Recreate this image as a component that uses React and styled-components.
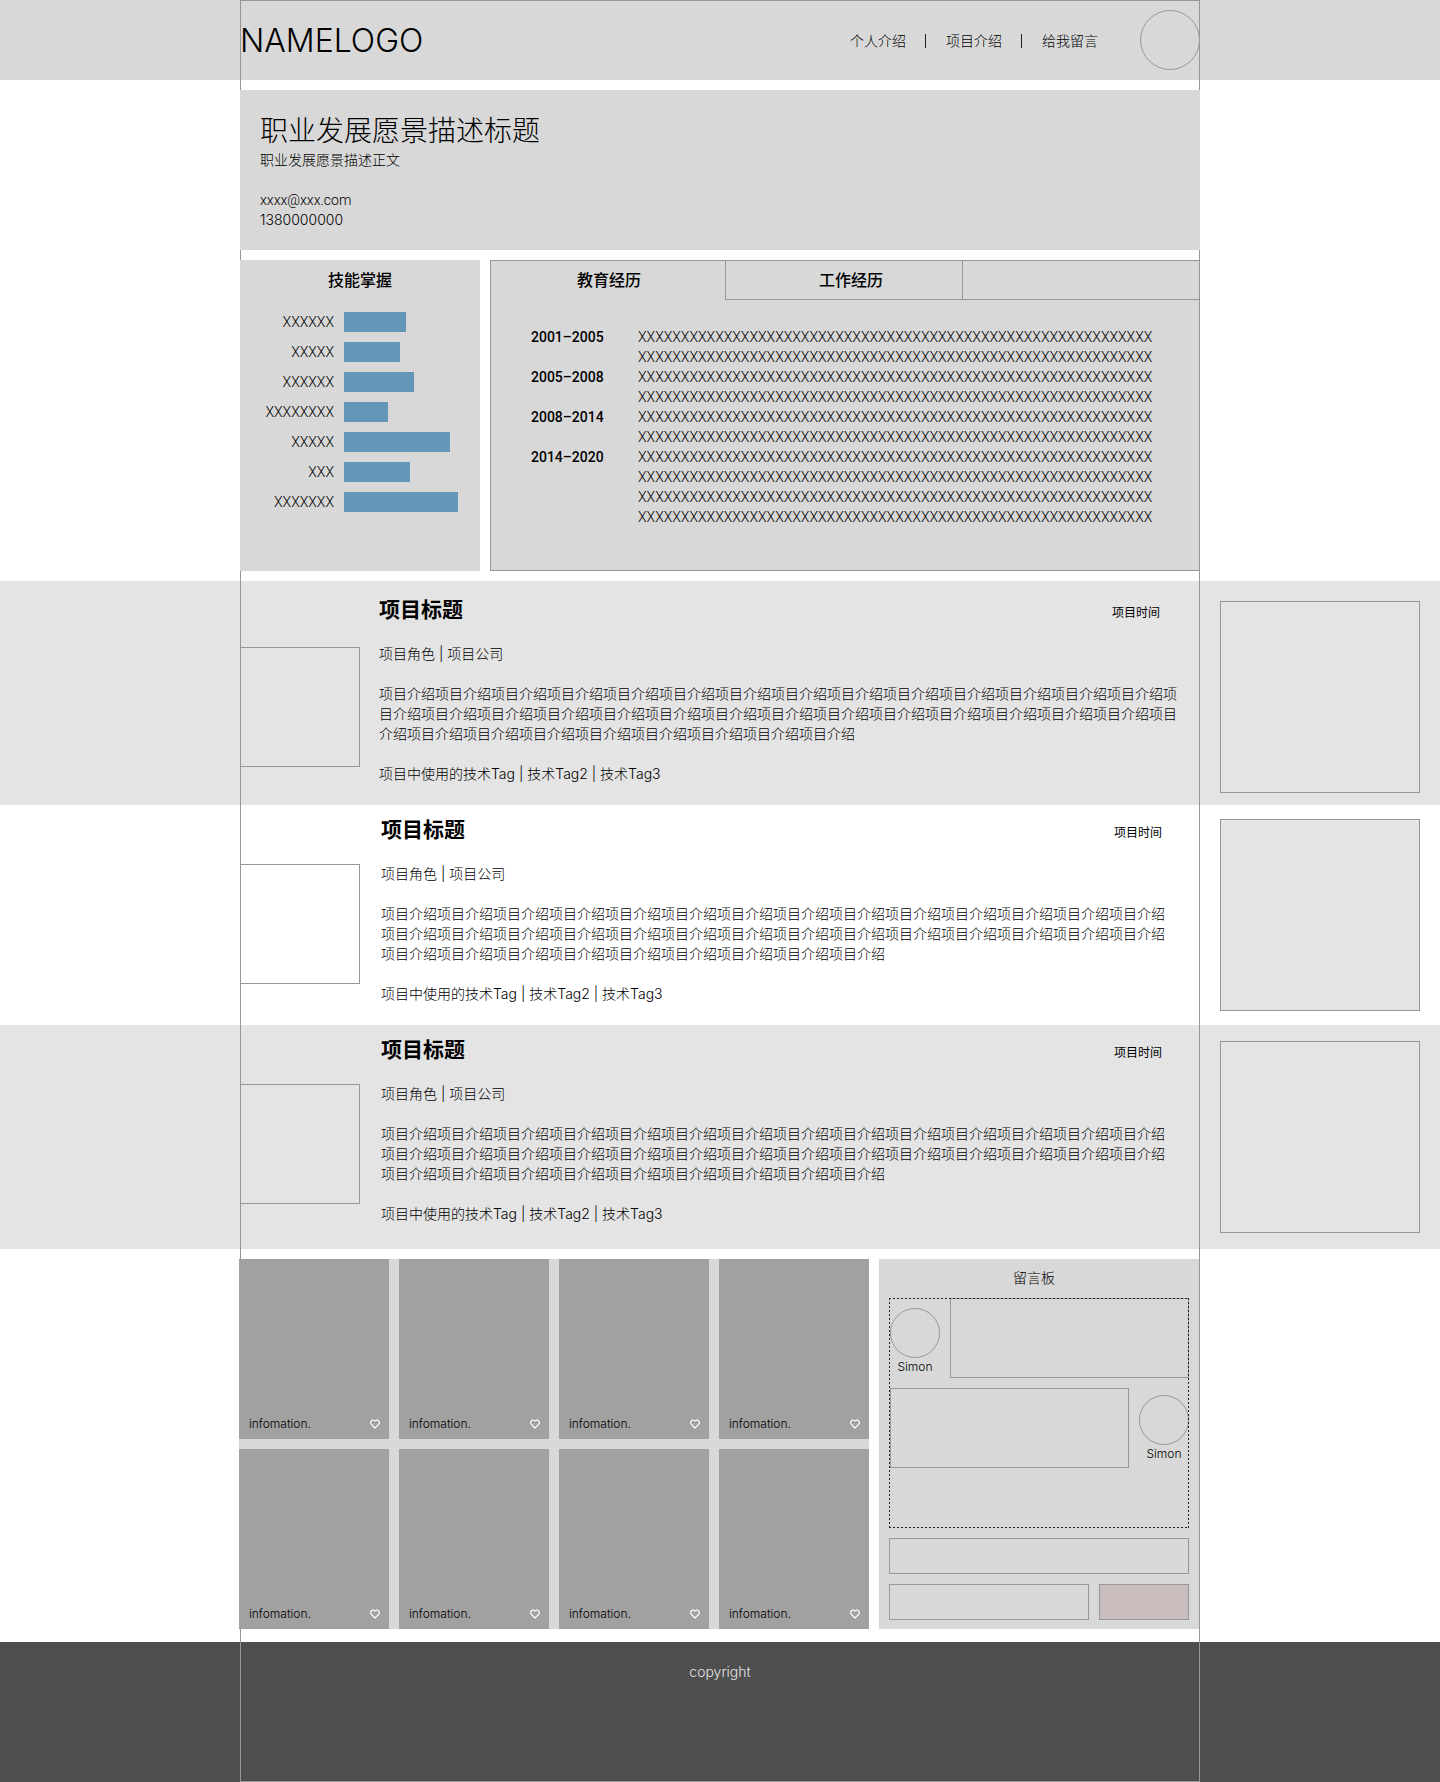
import React, { useState } from "react";
import styled, { createGlobalStyle } from "styled-components";

const line = "#979797";
const panel = "#d8d8d8";
const band = "#e4e4e4";
const ink = "#222";
const condensedStack = `Roboto, "Noto Sans CJK SC", sans-serif`;

const GlobalStyle = createGlobalStyle`
  *, *::before, *::after { box-sizing: border-box; }
  body {
    margin: 0;
    background: #fff;
    color: #000;
    font-family: Inter, "Noto Sans CJK SC", sans-serif;
    font-size: 14px;
    font-weight: 300;
    line-height: 20px;
  }
  h1, h2, p, ul { margin: 0; padding: 0; font-weight: inherit; font-size: inherit; }
  ul { list-style: none; }
  a { color: inherit; text-decoration: none; }
  button, input { font: inherit; color: inherit; margin: 0; padding: 0; border-radius: 0; }
`;

const Page = styled.div`
  position: relative;
`;

/* Thin frame that marks the content column over every full-width band. */
const Guides = styled.div`
  position: absolute;
  z-index: 1;
  top: 0;
  bottom: 0;
  left: 0;
  right: 0;
  max-width: 960px;
  margin: 0 auto;
  border: 1px solid ${line};
  pointer-events: none;
`;

const Container = styled.div`
  max-width: 960px;
  margin: 0 auto;
`;

const HeaderBar = styled.header`
  background: ${panel};
`;

const HeaderRow = styled(Container)`
  display: flex;
  align-items: center;
  height: 80px;
`;

const Logo = styled.a`
  padding-top: 2px;
  font-size: 32px;
  line-height: 40px;
`;

const Nav = styled.nav`
  margin: 0 42px 0 auto;
`;

const NavList = styled.ul`
  display: flex;
  align-items: center;
  padding-top: 2px;
`;

const NavItem = styled.li`
  line-height: 14px;
  & + & {
    margin-left: 19px;
    padding-left: 20px;
    border-left: 1px solid ${ink};
  }
`;

const Circle = styled.div`
  flex: none;
  width: ${(p) => p.$size}px;
  height: ${(p) => p.$size}px;
  border: 1px solid ${line};
  border-radius: 50%;
`;

const Hero = styled.section`
  position: relative;
  z-index: 2;
  max-width: 960px;
  margin: 10px auto 0;
  padding: 22px 20px 20px;
  background: ${panel};
`;

const HeroTitle = styled.h1`
  font-size: 28px;
  line-height: 38px;
`;

const Contact = styled.address`
  margin-top: 20px;
  font-style: normal;
`;

const Email = styled.a`
  display: block;
  font-family: ${condensedStack};
`;

const Overview = styled(Container)`
  display: grid;
  grid-template-columns: 240px minmax(0, 1fr);
  gap: 10px;
  margin-top: 10px;
`;

const Skills = styled.section`
  position: relative;
  z-index: 2;
  padding-top: 10px;
  background: ${panel};
`;

const PanelTitle = styled.h2`
  font-size: 16px;
  font-weight: 500;
  line-height: 20px;
  text-align: center;
`;

const SkillList = styled.ul`
  display: grid;
  gap: 10px;
  margin-top: 22px;
`;

const Skill = styled.li`
  display: grid;
  grid-template-columns: 94px 1fr;
  gap: 10px;
  font-family: ${condensedStack};
  text-align: right;
`;

const Bar = styled.div`
  height: 20px;
  background: #6496b8;
`;

const History = styled.section`
  border: 1px solid ${line};
  background: ${panel};
`;

const Tabs = styled.div`
  display: grid;
  grid-template-columns: 234fr 237fr 237fr;
`;

const Tab = styled.button`
  height: 39px;
  padding: 0 0 0 ${(p) => p.$inset}px;
  border: 0 solid ${(p) => (p.$active ? "transparent" : line)};
  border-width: ${(p) => (p.$first ? "0 0 1px" : "0 0 1px 1px")};
  background: none;
  font-size: 16px;
  font-weight: 500;
  text-align: left;
  cursor: pointer;
`;

const HistoryBody = styled.div`
  display: grid;
  grid-template-columns: 107px minmax(0, 1fr);
  padding: 27px 20px 43px 40px;
  font-family: ${condensedStack};
`;

const Dates = styled.ul`
  display: grid;
  align-content: start;
  gap: 20px;
  font-weight: 500;
`;

const Projects = styled.main`
  margin-top: 10px;
`;

const ProjectBand = styled.section`
  display: grid;
  grid-template-columns: minmax(0, 1fr) minmax(0, 960px) minmax(0, 1fr);
  min-height: ${(p) => (p.$filled ? 224 : 220)}px;
  background: ${(p) => (p.$filled ? band : "transparent")};
`;

const ProjectMain = styled.div`
  grid-column: 2;
  display: grid;
  grid-template-columns: 120px minmax(0, 1fr);
  gap: ${(p) => (p.$lead ? 19 : 21)}px;
  padding-top: ${(p) => (p.$lead ? 15 : 11)}px;
`;

const Thumb = styled.div`
  height: 120px;
  margin-top: ${(p) => (p.$lead ? 51 : 48)}px;
  border: 1px solid ${line};
`;

const ProjectText = styled.div`
  padding-right: ${(p) => (p.$lead ? 20 : 30)}px;
`;

const ProjectHead = styled.div`
  display: flex;
  align-items: baseline;
  justify-content: space-between;
  margin-right: ${(p) => (p.$lead ? 20 : 8)}px;
`;

const ProjectTitle = styled.h2`
  font-size: 21px;
  font-weight: 700;
  line-height: 28px;
`;

const ProjectTime = styled.span`
  font-size: 12px;
  font-weight: 400;
`;

const ProjectLine = styled.p`
  margin-top: 20px;
`;

const Preview = styled.div`
  width: 200px;
  height: 192px;
  margin-left: 20px;
  margin-top: ${(p) => (p.$lead ? 20 : 0)}px;
  align-self: ${(p) => (p.$lead ? "start" : "center")};
  border: 1px solid ${line};
  background: ${band};
`;

const Bottom = styled.div`
  display: grid;
  grid-template-columns: minmax(0, 1fr) 320px;
  gap: 10px;
  max-width: 962px;
  margin: 10px auto 13px;
  padding-right: 2px;
`;

const Gallery = styled.ul`
  position: relative;
  z-index: 2;
  display: grid;
  grid-template-columns: repeat(4, minmax(0, 1fr));
  gap: 10px;
  background: ${panel};
`;

const Tile = styled.li`
  display: flex;
  align-items: flex-end;
  justify-content: space-between;
  height: 180px;
  padding: 0 9px 5px 10px;
  background: #a1a1a1;
  font-size: 12px;
`;

const LikeButton = styled.button`
  display: flex;
  align-items: center;
  height: 20px;
  border: 0;
  background: none;
  cursor: pointer;
`;

const Board = styled.section`
  padding: 9px 10px;
  background: ${panel};
`;

const BoardTitle = styled.h2`
  margin-right: 10px;
  text-align: center;
`;

const dashes = (angle) =>
  `repeating-linear-gradient(${angle}, ${ink} 0 2px, transparent 2px 4px)`;

const Thread = styled.div`
  position: relative;
  display: grid;
  align-content: start;
  gap: 10px;
  height: 230px;
  margin: 10px 0;
  padding-left: 1px;

  &::after {
    content: "";
    position: absolute;
    inset: 0;
    pointer-events: none;
    background:
      ${dashes("90deg")} top / 100% 1px no-repeat,
      ${dashes("90deg")} bottom / 100% 1px no-repeat,
      ${dashes("180deg")} left / 1px 100% no-repeat,
      ${dashes("180deg")} right / 1px 100% no-repeat;
  }
`;

const Message = styled.article`
  display: flex;
  flex-direction: ${(p) => (p.$own ? "row-reverse" : "row")};
  gap: 10px;
`;

const Person = styled.div`
  padding-top: ${(p) => (p.$own ? 7 : 10)}px;
  font-size: 12px;
  line-height: 18px;
  text-align: center;
`;

const Bubble = styled.div`
  flex: 1;
  height: 80px;
  border: 1px solid ${line};
`;

const Form = styled.form`
  display: grid;
  grid-template-columns: minmax(0, 1fr) 90px;
  gap: 10px;
`;

const Field = styled.input`
  grid-column: ${(p) => (p.$wide ? "1 / -1" : "auto")};
  width: 100%;
  height: 36px;
  border: 1px solid ${line};
  background: none;
`;

const Send = styled.button`
  height: 36px;
  border: 1px solid ${line};
  background: #c9bdbd;
  cursor: pointer;
`;

const Footer = styled.footer`
  height: 140px;
  padding-top: 20px;
  background: #4e4e4e;
  color: ${band};
  text-align: center;
`;

const skills = [
  ["XXXXXX", 62],
  ["XXXXX", 56],
  ["XXXXXX", 70],
  ["XXXXXXXX", 44],
  ["XXXXX", 106],
  ["XXX", 66],
  ["XXXXXXX", 114],
];

const dates = ["2001–2005", "2005–2008", "2008–2014", "2014–2020"];
const historyLines = Array.from({ length: 10 }, () => "X".repeat(60));

const projects = [
  { id: 1, filled: true, lead: true },
  { id: 2, filled: false, lead: false },
  { id: 3, filled: true, lead: false },
];
const intro = "项目介绍".repeat(37);

const tabs = [
  { label: "教育经历", inset: 86 },
  { label: "工作经历", inset: 93 },
  { label: "", inset: 0 },
];

function Heart() {
  return (
    <svg width="10" height="10" viewBox="0 0 10 10" fill="none" stroke="#fff" strokeWidth="1.2" strokeLinejoin="round">
      <path d="M5 9 .7 4.700V2.600L2.200 1.100H3.800L5 2.100 6.200 1.100H7.800L9.300 2.600V4.700Z" />
    </svg>
  );
}

function Project({ filled, lead }) {
  return (
    <ProjectBand $filled={filled}>
      <ProjectMain $lead={lead}>
        <Thumb $lead={lead} />
        <ProjectText $lead={lead}>
          <ProjectHead $lead={lead}>
            <ProjectTitle>项目标题</ProjectTitle>
            <ProjectTime>项目时间</ProjectTime>
          </ProjectHead>
          <ProjectLine>项目角色 | 项目公司</ProjectLine>
          <ProjectLine>{intro}</ProjectLine>
          <ProjectLine>项目中使用的技术Tag | 技术Tag2 | 技术Tag3</ProjectLine>
        </ProjectText>
      </ProjectMain>
      <Preview $lead={lead} />
    </ProjectBand>
  );
}

export default function App() {
  const [active, setActive] = useState(0);
  return (
    <Page lang="zh-CN">
      <GlobalStyle />
      <Guides />
      <HeaderBar>
        <HeaderRow>
          <Logo href="#">NAMELOGO</Logo>
          <Nav>
            <NavList>
              <NavItem><a href="#about">个人介绍</a></NavItem>
              <NavItem><a href="#projects">项目介绍</a></NavItem>
              <NavItem><a href="#board">给我留言</a></NavItem>
            </NavList>
          </Nav>
          <Circle $size={60} />
        </HeaderRow>
      </HeaderBar>

      <Hero id="about">
        <HeroTitle>职业发展愿景描述标题</HeroTitle>
        <p>职业发展愿景描述正文</p>
        <Contact>
          <Email href="mailto:xxxx@xxx.com">xxxx@xxx.com</Email>
          <p>1380000000</p>
        </Contact>
      </Hero>

      <Overview>
        <Skills>
          <PanelTitle>技能掌握</PanelTitle>
          <SkillList>
            {skills.map(([name, width], i) => (
              <Skill key={i}>
                <span>{name}</span>
                <Bar style={{ width }} />
              </Skill>
            ))}
          </SkillList>
        </Skills>
        <History>
          <Tabs role="tablist">
            {tabs.map((tab, i) => (
              <Tab
                key={i}
                type="button"
                role="tab"
                aria-selected={active === i}
                $active={active === i}
                $first={i === 0}
                $inset={tab.inset}
                onClick={() => setActive(i)}
              >
                {tab.label}
              </Tab>
            ))}
          </Tabs>
          <HistoryBody role="tabpanel">
            <Dates>
              {dates.map((d) => <li key={d}>{d}</li>)}
            </Dates>
            <div>
              {historyLines.map((text, i) => <p key={i}>{text}</p>)}
            </div>
          </HistoryBody>
        </History>
      </Overview>

      <Projects id="projects">
        {projects.map(({ id, filled, lead }) => (
          <Project key={id} filled={filled} lead={lead} />
        ))}
      </Projects>

      <Bottom>
        <Gallery>
          {Array.from({ length: 8 }, (_, i) => (
            <Tile key={i}>
              <span>infomation.</span>
              <LikeButton type="button"><Heart /></LikeButton>
            </Tile>
          ))}
        </Gallery>
        <Board id="board">
          <BoardTitle>留言板</BoardTitle>
          <Thread>
            {[false, true].map((own, i) => (
              <Message key={i} $own={own}>
                <Person $own={own}>
                  <Circle $size={50} />
                  Simon
                </Person>
                <Bubble />
              </Message>
            ))}
          </Thread>
          <Form onSubmit={(e) => e.preventDefault()}>
            <Field $wide type="text" />
            <Field type="text" />
            <Send type="submit" />
          </Form>
        </Board>
      </Bottom>

      <Footer>copyright</Footer>
    </Page>
  );
}
